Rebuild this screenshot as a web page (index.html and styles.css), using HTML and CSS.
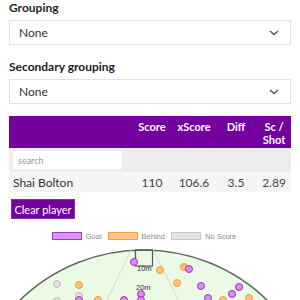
FILE: index.html
```html
<!DOCTYPE html>
<html lang="en">
<head>
<meta charset="UTF-8">
<meta name="viewport" content="width=device-width, initial-scale=1.0">
<title>Player shots</title>
<link rel="stylesheet" href="styles.css">
</head>
<body>
  <div class="page">
    <label class="label" for="grouping">Grouping</label>
    <div class="select-wrap">
      <select id="grouping" class="select">
        <option>None</option>
      </select>
      <svg class="chevron" width="10" height="6" viewBox="0 0 10 6"><path d="M1 1l4 3.5L9 1" fill="none" stroke="#555" stroke-width="1.4"/></svg>
    </div>

    <label class="label label-second" for="secondary">Secondary grouping</label>
    <div class="select-wrap">
      <select id="secondary" class="select">
        <option>None</option>
      </select>
      <svg class="chevron" width="10" height="6" viewBox="0 0 10 6"><path d="M1 1l4 3.5L9 1" fill="none" stroke="#555" stroke-width="1.4"/></svg>
    </div>

    <table class="stats">
      <colgroup>
        <col class="col-name">
        <col class="col-num">
        <col class="col-num">
        <col class="col-num">
        <col class="col-last">
      </colgroup>
      <thead>
        <tr>
          <th></th>
          <th>Score</th>
          <th>xScore</th>
          <th>Diff</th>
          <th>Sc /<br>Shot</th>
        </tr>
      </thead>
      <tbody>
        <tr class="filter-row">
          <td><input class="search" type="text" placeholder="search"></td>
          <td></td><td></td><td></td><td></td>
        </tr>
        <tr class="data-row">
          <td class="name">Shai Bolton</td>
          <td>110</td>
          <td>106.6</td>
          <td>3.5</td>
          <td>2.89</td>
        </tr>
      </tbody>
    </table>

    <button class="button">Clear player</button>

    <div class="legend">
      <span class="swatch goal"></span><span class="legend-text">Goal</span>
      <span class="swatch behind"></span><span class="legend-text">Behind</span>
      <span class="swatch noscore"></span><span class="legend-text">No Score</span>
    </div>

    <!-- shot map, coordinates are page pixels -->
    <svg class="pitch" width="282" height="70" viewBox="9 245 282 70">
      <circle cx="143.5" cy="427.5" r="177.5" fill="#eafae4" stroke="#666" stroke-width="1.5"/>
      <line x1="131" y1="250" x2="100" y2="315" stroke="#d6d6d6" stroke-width="1"/>
      <line x1="153" y1="250" x2="186" y2="315" stroke="#d6d6d6" stroke-width="1"/>
      <rect x="135.5" y="250" width="17" height="16" fill="none" stroke="#555" stroke-width="1.2"/>
      <text x="137" y="271" class="dist">10m</text>
      <text x="136" y="290" class="dist">20m</text>

      <g class="nos">
        <circle cx="57" cy="284" r="3.5"/>
        <circle cx="79" cy="296" r="3.5"/>
        <circle cx="57" cy="301" r="3.5"/>
      </g>
      <g class="beh">
        <circle cx="160" cy="270" r="3.5"/>
        <circle cx="184" cy="267" r="3.5"/>
        <circle cx="79" cy="285" r="3.5"/>
        <circle cx="177" cy="283" r="3.5"/>
        <circle cx="223" cy="300" r="3.5"/>
        <circle cx="249" cy="298" r="3.5"/>
        <circle cx="98" cy="300" r="3.5"/>
      </g>
      <g class="gl">
        <circle cx="134" cy="262" r="3.5"/>
        <circle cx="189" cy="269" r="3.5"/>
        <circle cx="201" cy="286" r="3.5"/>
        <circle cx="239" cy="287" r="3.5"/>
        <circle cx="232" cy="294" r="3.5"/>
        <circle cx="141" cy="294" r="3.5"/>
        <circle cx="208" cy="298" r="3.5"/>
        <circle cx="79" cy="300" r="3.5"/>
        <circle cx="124" cy="300" r="3.5"/>
        <circle cx="141" cy="300" r="3.5"/>
      </g>
    </svg>
  </div>
</body>
</html>
```

FILE: styles.css
```css
body {
  margin: 0;
  font-family: "Lato", "Open Sans", sans-serif;
  color: #222;
  background: #fff;
}
.page {
  padding: 0 9px;
}
.label {
  display: block;
  font-size: 12px;
  font-weight: bold;
  line-height: 16px;
  color: #222;
  margin-bottom: 4px;
}
.label-second {
  margin-top: 14px;
}
.select-wrap {
  position: relative;
}
.select {
  display: block;
  width: 100%;
  height: 25px;
  appearance: none;
  -webkit-appearance: none;
  border: 1px solid #e2e2e2;
  border-radius: 0;
  background: #fff;
  padding: 0 9px;
  font-family: inherit;
  font-size: 12px;
  color: #333;
}
.chevron {
  position: absolute;
  right: 12px;
  top: 10px;
}
.stats {
  width: 100%;
  margin-top: 12px;
  border-collapse: collapse;
  table-layout: fixed;
  font-size: 12px;
}
.col-name {
  width: 122px;
}
.col-num {
  width: 42px;
}
.col-last {
  width: 34px;
}
.stats th {
  background: #74009e;
  color: #fff;
  font-size: 11px;
  line-height: 13px;
  font-weight: bold;
  text-align: center;
  vertical-align: top;
  height: 32px;
  padding: 4px 0 0;
  box-sizing: border-box;
}
.stats td {
  text-align: center;
  padding: 0;
  color: #444;
}
.filter-row td {
  background: #ededed;
  height: 24px;
}
.search {
  display: block;
  width: 109px;
  height: 18px;
  margin-left: 4px;
  border: none;
  box-sizing: border-box;
  padding: 0 5px;
  font-family: inherit;
  font-size: 9px;
  background: #fff;
}
.search::placeholder {
  color: #999;
}
.data-row td {
  background: #f5f5f5;
  height: 20px;
}
.stats td.name {
  text-align: left;
  padding-left: 4px;
  color: #333;
}
.button {
  display: block;
  margin: 7px 0 0 2px;
  height: 20px;
  width: 64px;
  padding: 0;
  border: 1px solid #8a2cb0;
  background: #74009e;
  color: #fff;
  font-family: inherit;
  font-size: 11px;
  cursor: pointer;
}
.legend {
  display: flex;
  align-items: center;
  justify-content: center;
  margin: 11px 6px 0 0;
  height: 12px;
  font-family: "Liberation Sans", Arial, sans-serif;
  font-size: 7.5px;
  color: #888;
}
.swatch {
  width: 28px;
  height: 6px;
  margin-right: 4px;
  border: 1px solid;
}
.legend-text {
  margin-right: 6px;
}
.swatch.goal {
  background: #dd95f3;
  border-color: #a33bc6;
}
.swatch.behind {
  background: #ffc888;
  border-color: #f5a23f;
}
.swatch.noscore {
  background: #e5e5e5;
  border-color: #c9c9c9;
}
.pitch {
  display: block;
  margin-top: 3px;
}
.dist {
  font-family: "Liberation Sans", Arial, sans-serif;
  font-size: 7.5px;
  fill: #333;
}
.gl circle {
  fill: #d98cf2;
  stroke: #9d31c2;
  stroke-width: 1;
}
.beh circle {
  fill: #ffc27c;
  stroke: #f49b34;
  stroke-width: 1;
}
.nos circle {
  fill: #e2e2e2;
  stroke: #bdbdbd;
  stroke-width: 1;
}
```
